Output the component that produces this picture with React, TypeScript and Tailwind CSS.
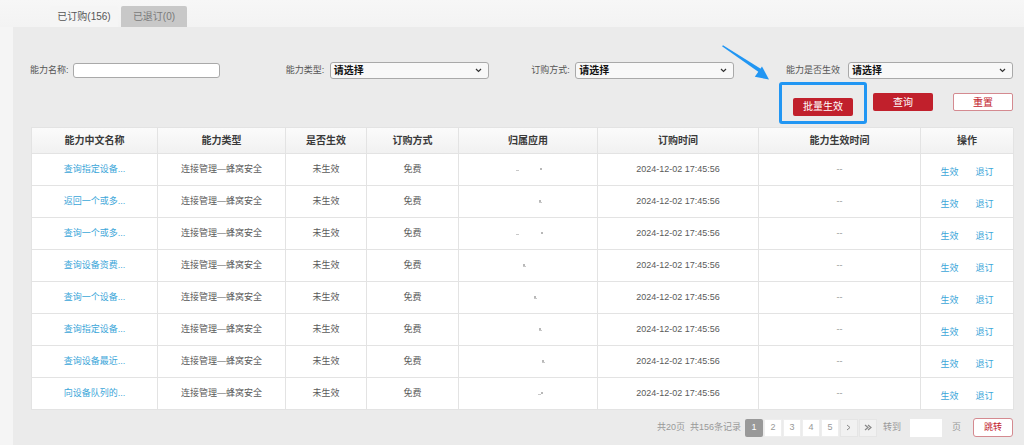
import React from "react";

const names = [
  "查询指定设备...",
  "返回一个或多...",
  "查询一个或多...",
  "查询设备资费...",
  "查询一个设备...",
  "查询指定设备...",
  "查询设备最近...",
  "向设备队列的...",
];

const marks = [
  [515, 539],
  [538, 538],
  [515, 540],
  [522, 522],
  [533, 533],
  [538, 538],
  [541, 541],
  [537, 540],
];

const cell = "flex items-center justify-center border-r border-b border-[#e3e3e3]";

function Select({ w }: { w: string }) {
  return (
    <div
      className={`${w} h-[17px] rounded-[3px] border border-[#a9a9a9] bg-[#f8f8f8] flex items-center justify-between pl-[3px] pr-[6px]`}
    >
      <span className="text-[10px] font-bold text-[#111]">请选择</span>
      <svg width="7" height="5" viewBox="0 0 7 5">
        <path d="M1 1 L3.5 3.5 L6 1" stroke="#333" strokeWidth="1.2" fill="none" />
      </svg>
    </div>
  );
}

export default function App() {
  return (
    <div className="relative w-[1024px] h-[445px] overflow-hidden bg-[#f5f5f5] font-['Liberation_Sans','Noto_Sans_CJK_SC',sans-serif] text-[#5a5a5a]">
      {/* tabs */}
      <div className="flex h-[27px] items-end gap-[3px] pl-[50px] bg-gradient-to-b from-[#f7f7f7] to-[#f3f3f3]">
        <div className="w-[68px] h-[21px] flex items-center justify-center bg-[#f5f5f5] text-[10px] text-[#555] rounded-t-[2px]">
          已订购(156)
        </div>
        <div className="w-[66px] h-[21px] flex items-center justify-center bg-[#c8c8c8] text-[10px] text-[#7a7a7a] rounded-t-[2px]">
          已退订(0)
        </div>
      </div>

      {/* panel */}
      <div className="ml-[13px] h-[418px] bg-[#ebebeb] pl-[18px] pr-[11px] pt-[35px]">
        {/* filter row */}
        <div className="flex items-center h-[17px] -ml-[1px]">
          <div className="w-[256px] flex items-center">
            <span className="w-[43px] text-[9px] text-[#555]">能力名称:</span>
            <div className="w-[147px] h-[15px] rounded-[3px] border border-[#a9a9a9] bg-white" />
          </div>
          <div className="w-[246px] flex items-center">
            <span className="w-[44px] text-[9px] text-[#555]">能力类型:</span>
            <Select w="w-[159px]" />
          </div>
          <div className="w-[255px] flex items-center">
            <span className="w-[44px] text-[9px] text-[#555]">订购方式:</span>
            <Select w="w-[159px]" />
          </div>
          <div className="flex items-center">
            <span className="w-[62px] text-[9px] text-[#555]">能力是否生效</span>
            <Select w="w-[165px]" />
          </div>
        </div>

        {/* buttons row */}
        <div className="flex justify-end gap-[20px] mt-[14px] h-[18px]">
          <div className="relative">
            <div className="absolute -left-[14px] -top-[11px] w-[88px] h-[42px] border-[3px] border-[#2196f3] rounded-[3px]" />
            <button className="w-[60px] h-[18px] rounded-[2px] bg-[#c1202c] text-white text-[10px]">批量生效</button>
          </div>
          <button className="w-[60px] h-[18px] rounded-[2px] bg-[#c1202c] text-white text-[10px]">查询</button>
          <button className="w-[60px] h-[18px] rounded-[2px] bg-white border border-[#d48a90] text-[#c1202c] text-[10px]">重置</button>
        </div>

        {/* table */}
        <div className="mt-[16px] border-l border-t border-[#e3e3e3] bg-white">
          <div className="grid grid-cols-[126px_128px_81px_92px_139px_161px_162px_93px]">
            {["能力中文名称", "能力类型", "是否生效", "订购方式", "归属应用", "订购时间", "能力生效时间", "操作"].map((h) => (
              <div
                key={h}
                className={`${cell} h-[26px] bg-gradient-to-b from-[#fbfbfb] to-[#f1f1f1] text-[10px] font-bold text-[#3a3a3a]`}
              >
                {h}
              </div>
            ))}
            {names.map((n, i) => (
              <React.Fragment key={i}>
                <div className={`${cell} h-[32px] text-[9px] text-[#3ba6d9]`}>{n}</div>
                <div className={`${cell} h-[32px] text-[9px]`}>连接管理—蜂窝安全</div>
                <div className={`${cell} h-[32px] text-[9px]`}>未生效</div>
                <div className={`${cell} h-[32px] text-[9px]`}>免费</div>
                <div className={`${cell} h-[32px] text-[9px] relative`}>
                  <span
                    className="absolute top-[16px] w-[3px] h-[1px] bg-[#c8c8c8]"
                    style={{ left: marks[i][0] - 458 }}
                  />
                  <span
                    className="absolute top-[14px] w-[2px] h-[2px] bg-[#b8b8b8]"
                    style={{ left: marks[i][1] - 458 }}
                  />
                </div>
                <div className={`${cell} h-[32px] text-[9px]`}>2024-12-02 17:45:56</div>
                <div className={`${cell} h-[32px] text-[9px] text-[#999]`}>--</div>
                <div className={`${cell} h-[32px] text-[9px] text-[#3ba6d9] gap-[17px] pt-[6px]`}>
                  <span>生效</span>
                  <span>退订</span>
                </div>
              </React.Fragment>
            ))}
          </div>
        </div>

        {/* pagination */}
        <div className="flex justify-end items-center mt-[8px] h-[19px] text-[9px] text-[#999]">
          <span className="mr-[4px] whitespace-pre">共20页  共156条记录</span>
          <div className="flex gap-[1px]">
            <div className="w-[18px] h-[18px] flex items-center justify-center rounded-[2px] bg-[#999] text-white">1</div>
            {["2", "3", "4", "5"].map((p) => (
              <div key={p} className="w-[18px] h-[18px] flex items-center justify-center bg-white border border-[#eee]">
                {p}
              </div>
            ))}
            <div className="w-[18px] h-[18px] flex items-center justify-center bg-[#f1f1f1] border border-[#e5e5e5]">
              <svg width="6" height="7" viewBox="0 0 6 7">
                <path d="M1 1 L4 3.5 L1 6" stroke="#888" strokeWidth="1" fill="none" />
              </svg>
            </div>
            <div className="w-[18px] h-[18px] flex items-center justify-center bg-[#f1f1f1] border border-[#e5e5e5]">
              <svg width="8" height="7" viewBox="0 0 8 7">
                <path d="M1 1 L4 3.5 L1 6 M4 1 L7 3.5 L4 6" stroke="#888" strokeWidth="1.2" fill="none" />
              </svg>
            </div>
          </div>
          <span className="ml-[6px]">转到</span>
          <div className="ml-[9px] w-[32px] h-[18px] bg-white" />
          <span className="ml-[10px]">页</span>
          <button className="ml-[12px] w-[40px] h-[19px] rounded-[3px] bg-white border border-[#d48a90] text-[#c1202c] text-[9px]">
            跳转
          </button>
        </div>
      </div>

      {/* annotation arrow */}
      <svg className="absolute left-0 top-0 pointer-events-none" width="1024" height="445" viewBox="0 0 1024 445">
        <polygon points="722,46.2 723,45.3 761.5,69.3 759.3,72.6" fill="#2196f3" />
        <polygon points="769,79.5 754.8,76.8 762,66.5" fill="#2196f3" />
      </svg>
    </div>
  );
}
